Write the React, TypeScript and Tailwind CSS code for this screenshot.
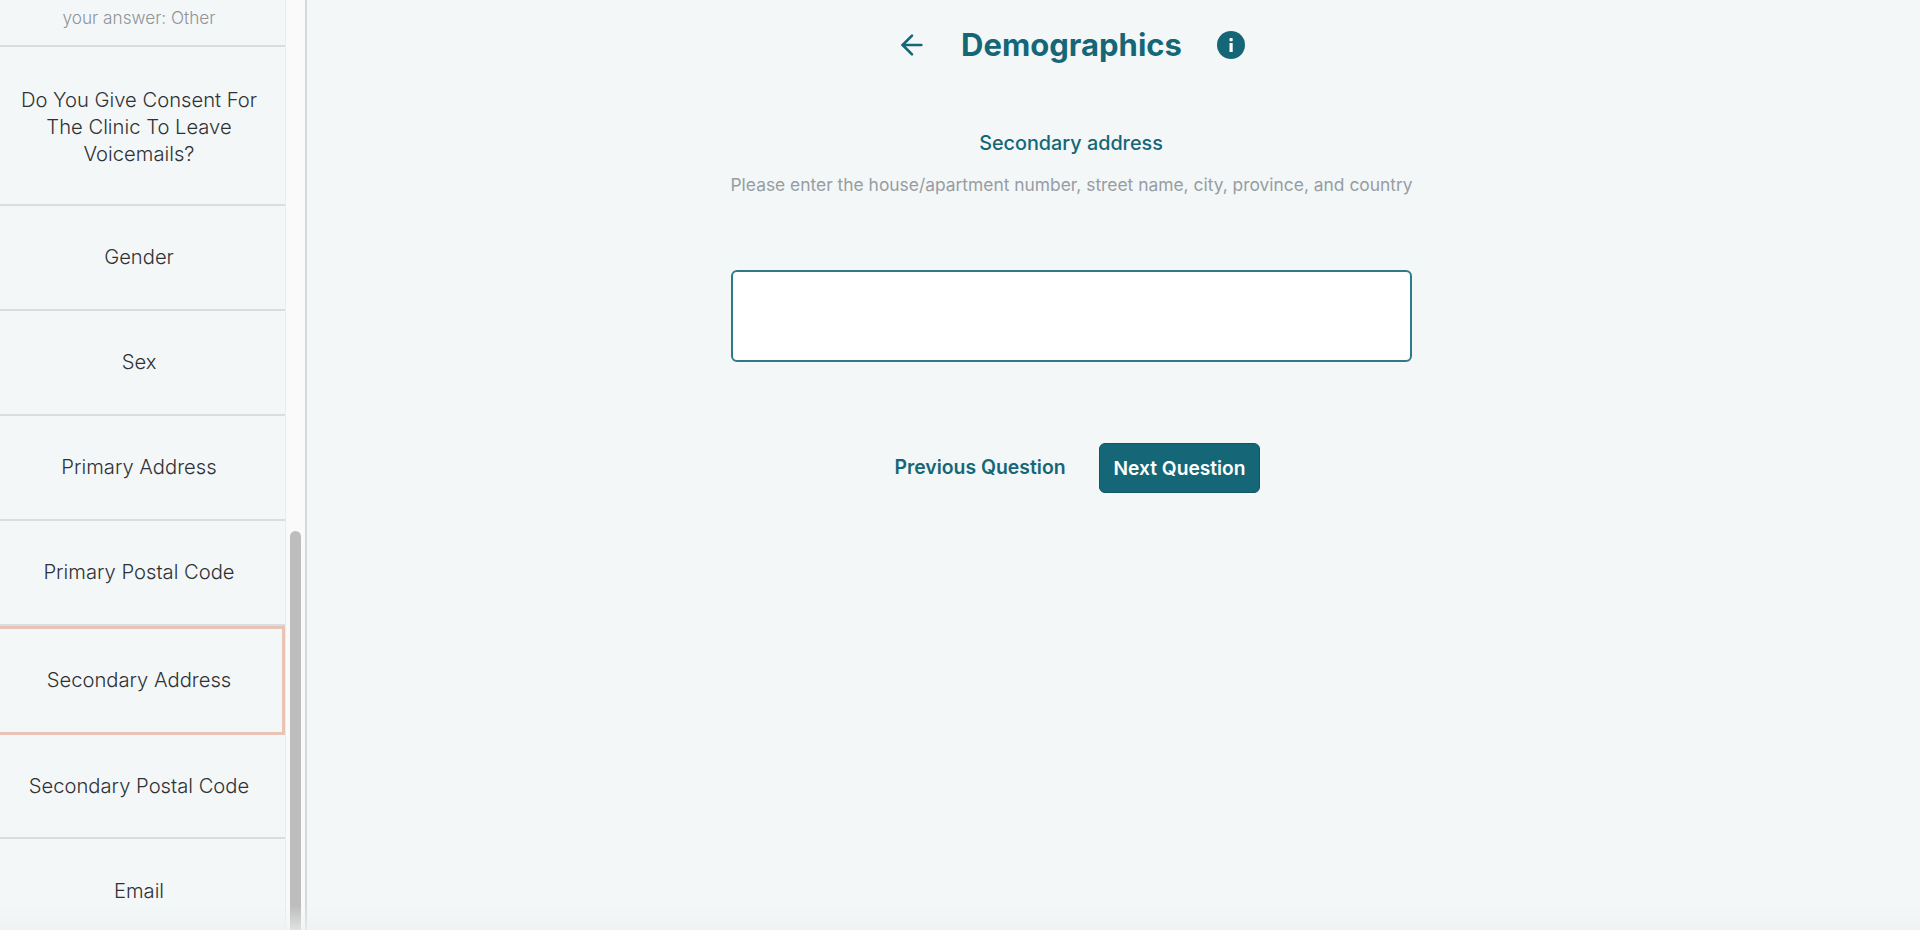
import { ArrowLeft } from 'lucide-react';

const rows = ['Gender', 'Sex', 'Primary Address', 'Primary Postal Code'];

const InfoIcon = () => (
  <svg width="28" height="28" viewBox="0 0 28 28">
    <circle cx="14" cy="14" r="14" fill="#156778" />
    <rect x="12.5" y="12" width="3.2" height="9" rx="0.6" fill="#fff" />
    <rect x="12.5" y="7" width="3.2" height="3.2" rx="0.8" fill="#fff" />
  </svg>
);

const Sidebar = () => (
  <aside className="flex h-full w-[307px] shrink-0 bg-[#fafafa] border-r-[2px] border-[#d5d9dc]">
    <div className="w-[286px] shrink-0 bg-[#f4f7f8] border-r border-[#e8ecef] text-[#2f3235] text-[20.2px] font-[350] text-center">
      <div className="h-[47px] pt-[5px] pr-[7px] border-b-[2px] border-[#d8dde1] text-[17.2px] text-[#8e9499]">your answer: Other</div>
      <div className="h-[159px] pt-[39px] pr-[7px] border-b-[2px] border-[#d8dde1] leading-[27px] whitespace-nowrap">
        Do You Give Consent For
        <br />
        The Clinic To Leave
        <br />
        Voicemails?
      </div>
      {rows.map((label) => (
        <div key={label} className="h-[105px] flex items-center justify-center pr-[7px] border-b-[2px] border-[#d8dde1]">
          {label}
        </div>
      ))}
      <div className="h-[109px] flex items-center justify-center pr-[4px] border-[3px] border-l-0 border-[#e9c4b6]">Secondary Address</div>
      <div className="h-[104px] flex items-center justify-center pr-[7px] border-b-[2px] border-[#d8dde1]">Secondary Postal Code</div>
      <div className="h-[105px] flex items-center justify-center pr-[7px]">Email</div>
    </div>
    <div className="flex-1 pt-[531px] px-[4px]">
      <div className="h-full w-[11px] rounded-t-full bg-[#bdbdbd]" />
    </div>
  </aside>
);

const Question = () => (
  <main className="flex-1 flex flex-col items-center pr-[85px] text-[#156778]">
    <div className="flex items-center h-[44px] mt-[23px] w-[354px]">
      <ArrowLeft size={32} strokeWidth={2} className="shrink-0 ml-[2px]" />
      <h1 className="w-[221px] ml-[33px] text-center text-[31px] font-bold whitespace-nowrap">Demographics</h1>
      <div className="ml-[35px] shrink-0">
        <InfoIcon />
      </div>
    </div>
    <h2 className="mt-[63px] text-[19.8px] font-[450] leading-[26px]">Secondary address</h2>
    <p className="mt-[18px] w-[681px] text-center text-[17.4px] leading-[22px] text-[#979da2] whitespace-nowrap">
      Please enter the house/apartment number, street name, city, province, and country
    </p>
    <div className="mt-[74px] w-[681px] h-[92px] bg-white border-[2px] border-[#2f7a8a] rounded-[6px]" />
    <div className="mt-[81px] ml-[12px] flex items-center">
      <button className="w-[172px] text-center text-[19.4px] font-semibold whitespace-nowrap">Previous Question</button>
      <button className="ml-[33px] w-[161px] h-[50px] rounded-[6px] bg-[#156778] border border-[#105664] text-white text-[19.2px] font-semibold whitespace-nowrap">
        Next Question
      </button>
    </div>
  </main>
);

export default function App() {
  return (
    <div className="relative flex h-[930px] w-full overflow-hidden bg-[#f4f7f8] font-['Inter',sans-serif]">
      <Sidebar />
      <Question />
      <div className="pointer-events-none absolute inset-x-0 bottom-0 h-[24px] bg-gradient-to-b from-transparent to-[#eef1f2]/70" />
    </div>
  );
}
